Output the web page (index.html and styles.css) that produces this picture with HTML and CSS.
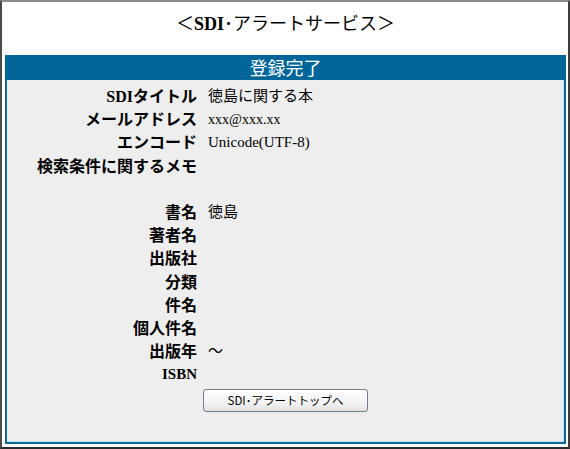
FILE: index.html
```html
<!DOCTYPE html>
<html lang="ja">
<head>
<meta charset="utf-8">
<title>SDI・アラートサービス</title>
<link rel="stylesheet" href="styles.css">
</head>
<body>
<div class="frame">
  <h1 class="title">＜<b>SDI</b>･アラートサービス＞</h1>
  <div class="box">
    <div class="box-head">登録完了</div>
    <div class="rows">
      <div class="label">SDIタイトル</div><div class="value">徳島に関する本</div>
      <div class="label">メールアドレス</div><div class="value small">xxx@xxx.xx</div>
      <div class="label">エンコード</div><div class="value">Unicode(UTF-8)</div>
      <div class="label">検索条件に関するメモ</div><div class="value"></div>
      <div class="label"></div><div class="value"></div>
      <div class="label">書名</div><div class="value">徳島</div>
      <div class="label">著者名</div><div class="value"></div>
      <div class="label">出版社</div><div class="value"></div>
      <div class="label">分類</div><div class="value"></div>
      <div class="label">件名</div><div class="value"></div>
      <div class="label">個人件名</div><div class="value"></div>
      <div class="label">出版年</div><div class="value">～</div>
      <div class="label latin">ISBN</div><div class="value"></div>
    </div>
    <div class="actions">
      <button class="btn" type="button">SDI･アラートトップへ</button>
    </div>
  </div>
</div>
</body>
</html>
```
FILE: styles.css
```css
html, body {
  margin: 0;
  padding: 0;
  background: #ffffff;
}
body {
  font-family: "Liberation Serif", "Noto Sans CJK JP", serif;
  color: #000;
}
.frame {
  box-sizing: border-box;
  width: 570px;
  height: 449px;
  border-style: solid;
  border-width: 2px;
  border-color: #8a8a8a #3c3c3c #2c2c2c #4a4a4a;
  background: #fff;
  padding: 0 2px 3px 3px;
  display: flex;
  flex-direction: column;
}
.title {
  margin: 0;
  height: 53px;
  line-height: 44px;
  text-align: center;
  font-size: 18px;
  font-weight: normal;
}
.title b {
  font-weight: bold;
}
.box {
  flex: 1;
  border: 2px solid #0c6a94;
  border-top: none;
  background: #efeeee;
  box-shadow: inset 0 -1px 0 #b8e4f2, inset -1px 0 0 #b8e4f2;
  display: flex;
  flex-direction: column;
}
.box-head {
  background: #006699;
  color: #fff;
  text-align: center;
  height: 25px;
  line-height: 25px;
  font-size: 18px;
  font-family: "Noto Sans CJK JP", sans-serif;
  margin: 0 -2px;
}
.rows {
  display: grid;
  grid-template-columns: 190px 1fr;
  column-gap: 11px;
  grid-auto-rows: 23.2px;
  padding-top: 5px;
}
.label, .value {
  line-height: 23px;
  white-space: nowrap;
}
.label {
  text-align: right;
  font-weight: bold;
  font-size: 16px;
}
.label.latin {
  font-size: 15px;
}
.value {
  font-size: 15px;
}
.value.small {
  font-size: 14px;
}
.actions {
  display: flex;
  justify-content: center;
  padding-top: 3px;
}
.btn {
  width: 165px;
  height: 23px;
  padding: 0;
  border: 1px solid #6f7f8f;
  border-radius: 3px;
  background: linear-gradient(#ffffff, #f3f3f3 60%, #e2e2e2);
  font-family: "Noto Sans CJK JP", sans-serif;
  font-size: 11.5px;
  color: #000;
  line-height: 21px;
}
```
